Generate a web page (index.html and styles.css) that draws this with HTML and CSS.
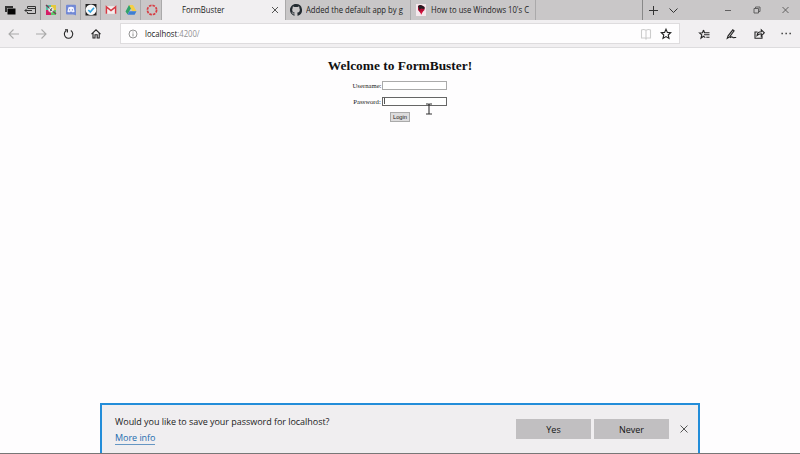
FILE: index.html
```html
<!DOCTYPE html>
<html lang="en">
<head>
<meta charset="utf-8">
<title>FormBuster</title>
<link rel="stylesheet" href="styles.css">
</head>
<body>
<div class="window">
  <header class="tabs">
    <div class="cell"><svg class="i" viewBox="0 0 12 12"><path d="M1 2h8v2H3v4H1z" fill="#333"/><path d="M3.500 4.500h8v6h-8z" fill="#050505"/></svg></div>
    <div class="cell"><svg class="i ln" viewBox="0 0 12 12"><path d="M3.500 4V2.500h8v7h-8V8M3.500 4.500h8M.8 6.500H8M2.700 4.800L1 6.500l1.700 1.700"/></svg></div>
    <div class="cell pin"><svg class="i" viewBox="0 0 12 12"><path d="M1 1h5v5H1z" fill="#55bea4"/><path d="M6 1h5v5H6z" fill="#e4c83d"/><path d="M1 6h5v5H1z" fill="#d51c66"/><path d="M6 6h5v5H6z" fill="#5cc86a"/><path d="M1 1l10 9" stroke="#743d52" stroke-width="1.400"/><circle cx="6" cy="5.700" r="2.700" fill="#eee"/><path d="M4.500 4.500l3 2.800M7 4L5 7.500" stroke="#555" stroke-width=".9"/></svg></div>
    <div class="cell pin"><svg class="i" viewBox="0 0 12 12"><rect x="1" y=".8" width="10" height="9.700" rx="1" fill="#7289d5"/><path d="M8 10l3 1.600V9" fill="#7289d5"/><path d="M3.400 3.200q2.600-1 5.200 0l1 4.500-1.900.8-.6-.7H4.900l-.6.7-1.900-.8z" fill="#f3f4ff"/><path d="M4.600 5.200v1.300M7.400 5.200v1.300" stroke="#7289d5"/></svg></div>
    <div class="cell pin"><svg class="i" viewBox="0 0 12 12"><path d="M.5 0h11v11.500H.5z" fill="#222"/><circle cx="6" cy="5.800" r="5.300" fill="#fafafa"/><path d="M3.300 6l2 2L9 3.800" fill="none" stroke="#32a5df" stroke-width="1.700"/></svg></div>
    <div class="cell pin"><svg class="i" viewBox="0 0 12 12"><path d="M.8 2.200h10.400v7.600H.8z" fill="#f5eeee"/><path d="M1.400 9.800V2.800L6 6.600l4.600-3.800v7" fill="none" stroke="#d63943" stroke-width="1.500"/></svg></div>
    <div class="cell pin"><svg class="i" viewBox="0 0 12 12"><path d="M4 1h4L5 6 2.600 10.500.5 7.400z" fill="#2fa36b"/><path d="M4 1h4l3.500 6.300H7.400z" fill="#f5cf45"/><path d="M4.400 7.300h7.100L9.600 10.800h-7z" fill="#3e7ed3"/></svg></div>
    <div class="cell pin last"><svg class="i" viewBox="0 0 12 12"><circle cx="6" cy="6" r="4.600" fill="none" stroke="#d83b42" stroke-width="1.700" stroke-dasharray="2.600 1"/></svg></div>
    <div class="tab active"><span class="t1">FormBuster</span><svg class="x" viewBox="0 0 8 8"><path d="M1 1l6 6M7 1L1 7"/></svg></div>
    <div class="tab"><svg class="i" viewBox="0 0 16 16"><path fill="#222a30" d="M8 0C3.580 0 0 3.580 0 8c0 3.540 2.290 6.530 5.470 7.590.4.070.55-.17.55-.38v-1.490c-2.230.48-2.700-.95-2.700-.95-.36-.92-.89-1.170-.89-1.170-.73-.5.050-.49.050-.49.810.060 1.230.830 1.230.830.720 1.230 1.880.880 2.340.670.070-.52.280-.88.510-1.080-1.780-.2-3.650-.89-3.650-3.950 0-.87.310-1.590.820-2.150-.08-.2-.36-1.020.080-2.120 0 0 .67-.21 2.200.820a7.600 7.600 0 0 1 4 0c1.530-1.040 2.200-.82 2.200-.82.440 1.100.160 1.920.080 2.120.510.560.820 1.270.820 2.150 0 3.070-1.870 3.750-3.650 3.950.290.250.540.730.540 1.480v2.200c0 .21.150.46.550.38A8 8 0 0 0 8 0z"/></svg><span class="t2">Added the default app by g</span></div>
    <div class="tab"><svg class="i" viewBox="0 0 12 12"><path d="M1 0h10v12H1z" fill="#f4e9ed"/><path d="M3 2l2-1 2 .5L9.500 3v3L6 9.500 3 6z" fill="#b50b32"/><path d="M3 2l2-1 2 .5L9.500 3v2L6 4.500 4.500 6z" fill="#241d23"/><path d="M5.500 7l2.400.6L6 11z" fill="#d7143e"/></svg><span class="t3">How to use Windows 10's C</span></div>
    <div class="strip"></div>
    <svg class="tools" viewBox="0 0 157 20"><path d="M6 10.500h9M10.500 6v9M26.500 8.500l4 4 4-4"/><path class="wc" d="M82 10.500h6M111 8.500h4.500V13H111zM112.500 8.500V7h4.500v4.500h-1.500M139.500 7l6 6M145.500 7l-6 6"/></svg>
  </header>

  <nav class="bar">
    <svg class="nav" viewBox="0 0 120 28"><g stroke="#aaa"><path d="M19 14H9M13.500 9.500L9 14l4.500 4.500M36 14h10M41.500 9.500L46 14l-4.500 4.500"/></g><path d="M66.300 10.500a4.200 4.200 0 1 0 4.500 0M65 9.700h2.400v2.700M91.500 14.200L96 9.800l4.500 4.400M93 13v5h2v-3.200h2.200V18h2v-5"/></svg>
    <div class="address">
      <svg class="info" viewBox="0 0 10 10"><circle cx="5" cy="5" r="4"/><path d="M5 4.400v3M5 2.500v1"/></svg>
      <span class="url">localhost<span>:4200/</span></span>
      <svg class="fav" viewBox="0 0 32 20"><path stroke="#ccc" d="M6 6.200Q3.500 5 1.500 6v8h4L6 15l.5-1h4V6Q8.500 5 6 6.200V14"/><path d="M26 5.200l1.400 3.200 3.300.3-2.500 2.300.8 3.400-3-1.800-3 1.800.8-3.400-2.500-2.300 3.300-.3z"/></svg>
    </div>
    <svg class="actions" viewBox="0 0 120 28"><path d="M23.500 10l1 2.700h5M24 14.800h5.500M26.300 17.300h3.200M23.500 10l-1 2.700-3 .2 2.300 2-.8 3.200 2.500-1.800 1.800 1.300M47.300 18.200l.8-2.400 4.700-6 1.300 1-4.500 6.100zM50 17.800c2.200-2.500 2.600.8 4.500-.3h1.700M77.500 12H75v6.300h7V16M77 15.500c.3-2.700 2-3.700 4.300-3.700V9.800l3 3-3 3v-2c-2 0-3 .5-4.300 1.700z"/><path class="dots" d="M101.500 13.500h1.300M105.500 13.500h1.300M109.500 13.500h1.300"/></svg>
  </nav>

  <main class="page">
    <h1>Welcome to FormBuster!</h1>
    <form>
      <div class="row"><label for="u">Username:</label><input id="u" type="text"></div>
      <div class="row pw"><label for="p">Password:</label><input id="p" type="password"><i class="caret"></i></div>
      <button type="button" class="login">Login</button>
    </form>
    <svg class="cursor" viewBox="0 0 8 12"><path d="M1 1h2.300l.7.600.7-.600H7M4 1.500v9M1 11h2.300l.7-.600.7.600H7"/></svg>
  </main>

  <aside class="prompt">
    <div class="msg"><span class="q">Would you like to save your password for localhost?</span><a>More info</a></div>
    <button type="button">Yes</button><button type="button">Never</button>
    <svg class="x" viewBox="0 0 8 8"><path d="M.500.500l7 7M7.500.500l-7 7"/></svg>
  </aside>
  <div class="edge"></div>
</div>
</body>
</html>
```
FILE: styles.css
```css
* { box-sizing: border-box; }
body { margin: 0; overflow: hidden; background: #fefdfe; font-family: "Open Sans", "Noto Sans", sans-serif; color: #222; }
svg { display: block; flex: none; fill: none; stroke: none; }
.window { position: relative; width: 800px; height: 454px; display: flex; flex-direction: column; }
.tabs { display: flex; height: 20px; background: #c9c7c8; flex: none; }
.cell { width: 20px; height: 20px; display: flex; align-items: center; justify-content: center; flex: none; }
.cell:nth-child(2) { width: 21px; border-right: 1px solid #999; }
.pin { border-right: 1px solid #aaa9aa; }
.pin + .pin { padding-left: 1px; }
.last { width: 21px; }
.i { width: 12px; height: 12px; }
.ln { stroke: #333; stroke-width: 1; }
.tab { width: 125px; height: 20px; padding-left: 4px; display: flex; align-items: center; gap: 4px; border-right: 1px solid #aaa9aa; font-size: 9px; white-space: nowrap; flex: none; }
.tab span { transform: scaleX(.855); transform-origin: 0 50%; line-height: 18px; padding-bottom: 1px; }
.active { width: 124px; background: #f1eff1; padding: 0 6px 0 20px; justify-content: space-between; }
.x { width: 8px; height: 8px; stroke: #444; stroke-width: .9; }
.strip { width: 107px; border-right: 1px solid #888; flex: none; }
.tools { width: 157px; height: 20px; stroke: #333; stroke-width: 1; }
.wc { stroke: #555; stroke-width: .9; }
.bar { height: 28px; background: #f1eff1; display: flex; align-items: center; border-bottom: 1px solid #dddcde; flex: none; }
.nav, .actions { width: 120px; height: 28px; stroke: #252525; stroke-width: 1.1; }
.dots { stroke-width: 1.3; }
.address { width: 560px; height: 21px; background: #fefdfe; border: 1px solid #dedcde; display: flex; align-items: center; padding: 0 7px; font-size: 9px; }
.info { width: 10px; height: 10px; stroke: #777; stroke-width: .8; }
.url { margin-left: 7px; transform: scaleX(.855); transform-origin: 0 50%; }
.url span { color: #929092; }
.fav { width: 32px; height: 20px; margin-left: auto; stroke: #222; stroke-width: 1.1; }
.page { position: relative; flex: 1; font-family: "Liberation Serif", serif; }
h1 { margin: 9px 0 0; height: 18px; line-height: 18px; font-size: 13.4px; text-align: center; color: #111; }
form { display: flex; flex-direction: column; align-items: center; padding-top: 5px; }
.row { height: 10px; display: flex; align-items: center; gap: 1px; font-size: 6.7px; margin-bottom: 6px; }
.row input { width: 65px; height: 9px; padding: 0; border: 1px solid #aaa; background: #fff; outline: none; }
.pw { position: relative; }
.pw input { border-color: #666; }
.caret { position: absolute; left: 31px; top: 2px; width: 1px; height: 6px; background: #555; }
.login { width: 20px; height: 10px; padding: 0; border: 1px solid #aaa; background: #dddcdd; font: 5.8px/8px "Liberation Sans", sans-serif; color: #222; }
.cursor { position: absolute; left: 425px; top: 55px; width: 8px; height: 12px; stroke: #333; stroke-width: 1.1; }
.prompt { width: 600px; height: 51px; margin-left: 100px; border: 2px solid #238dd9; border-bottom: 0; background: #f0eef0; display: flex; align-items: center; padding: 0 10px 2px 13px; flex: none; }
.msg { display: flex; flex-direction: column; align-items: flex-start; gap: 4px; margin-right: auto; padding-top: 3px; font-size: 9px; letter-spacing: -.04px; line-height: 12px; white-space: nowrap; }
.msg a { color: #226caf; border-bottom: 1px solid #6696c3; }
.prompt button { width: 75px; height: 20px; padding: 1px 0 0; margin-right: 3px; border: 0; background: #c1bfc1; font: 9px "Open Sans", sans-serif; color: #151515; }
.prompt .x { margin-left: 8px; }
.edge { position: absolute; left: 0; right: 0; bottom: 0; height: 1px; background: #777; }
```
